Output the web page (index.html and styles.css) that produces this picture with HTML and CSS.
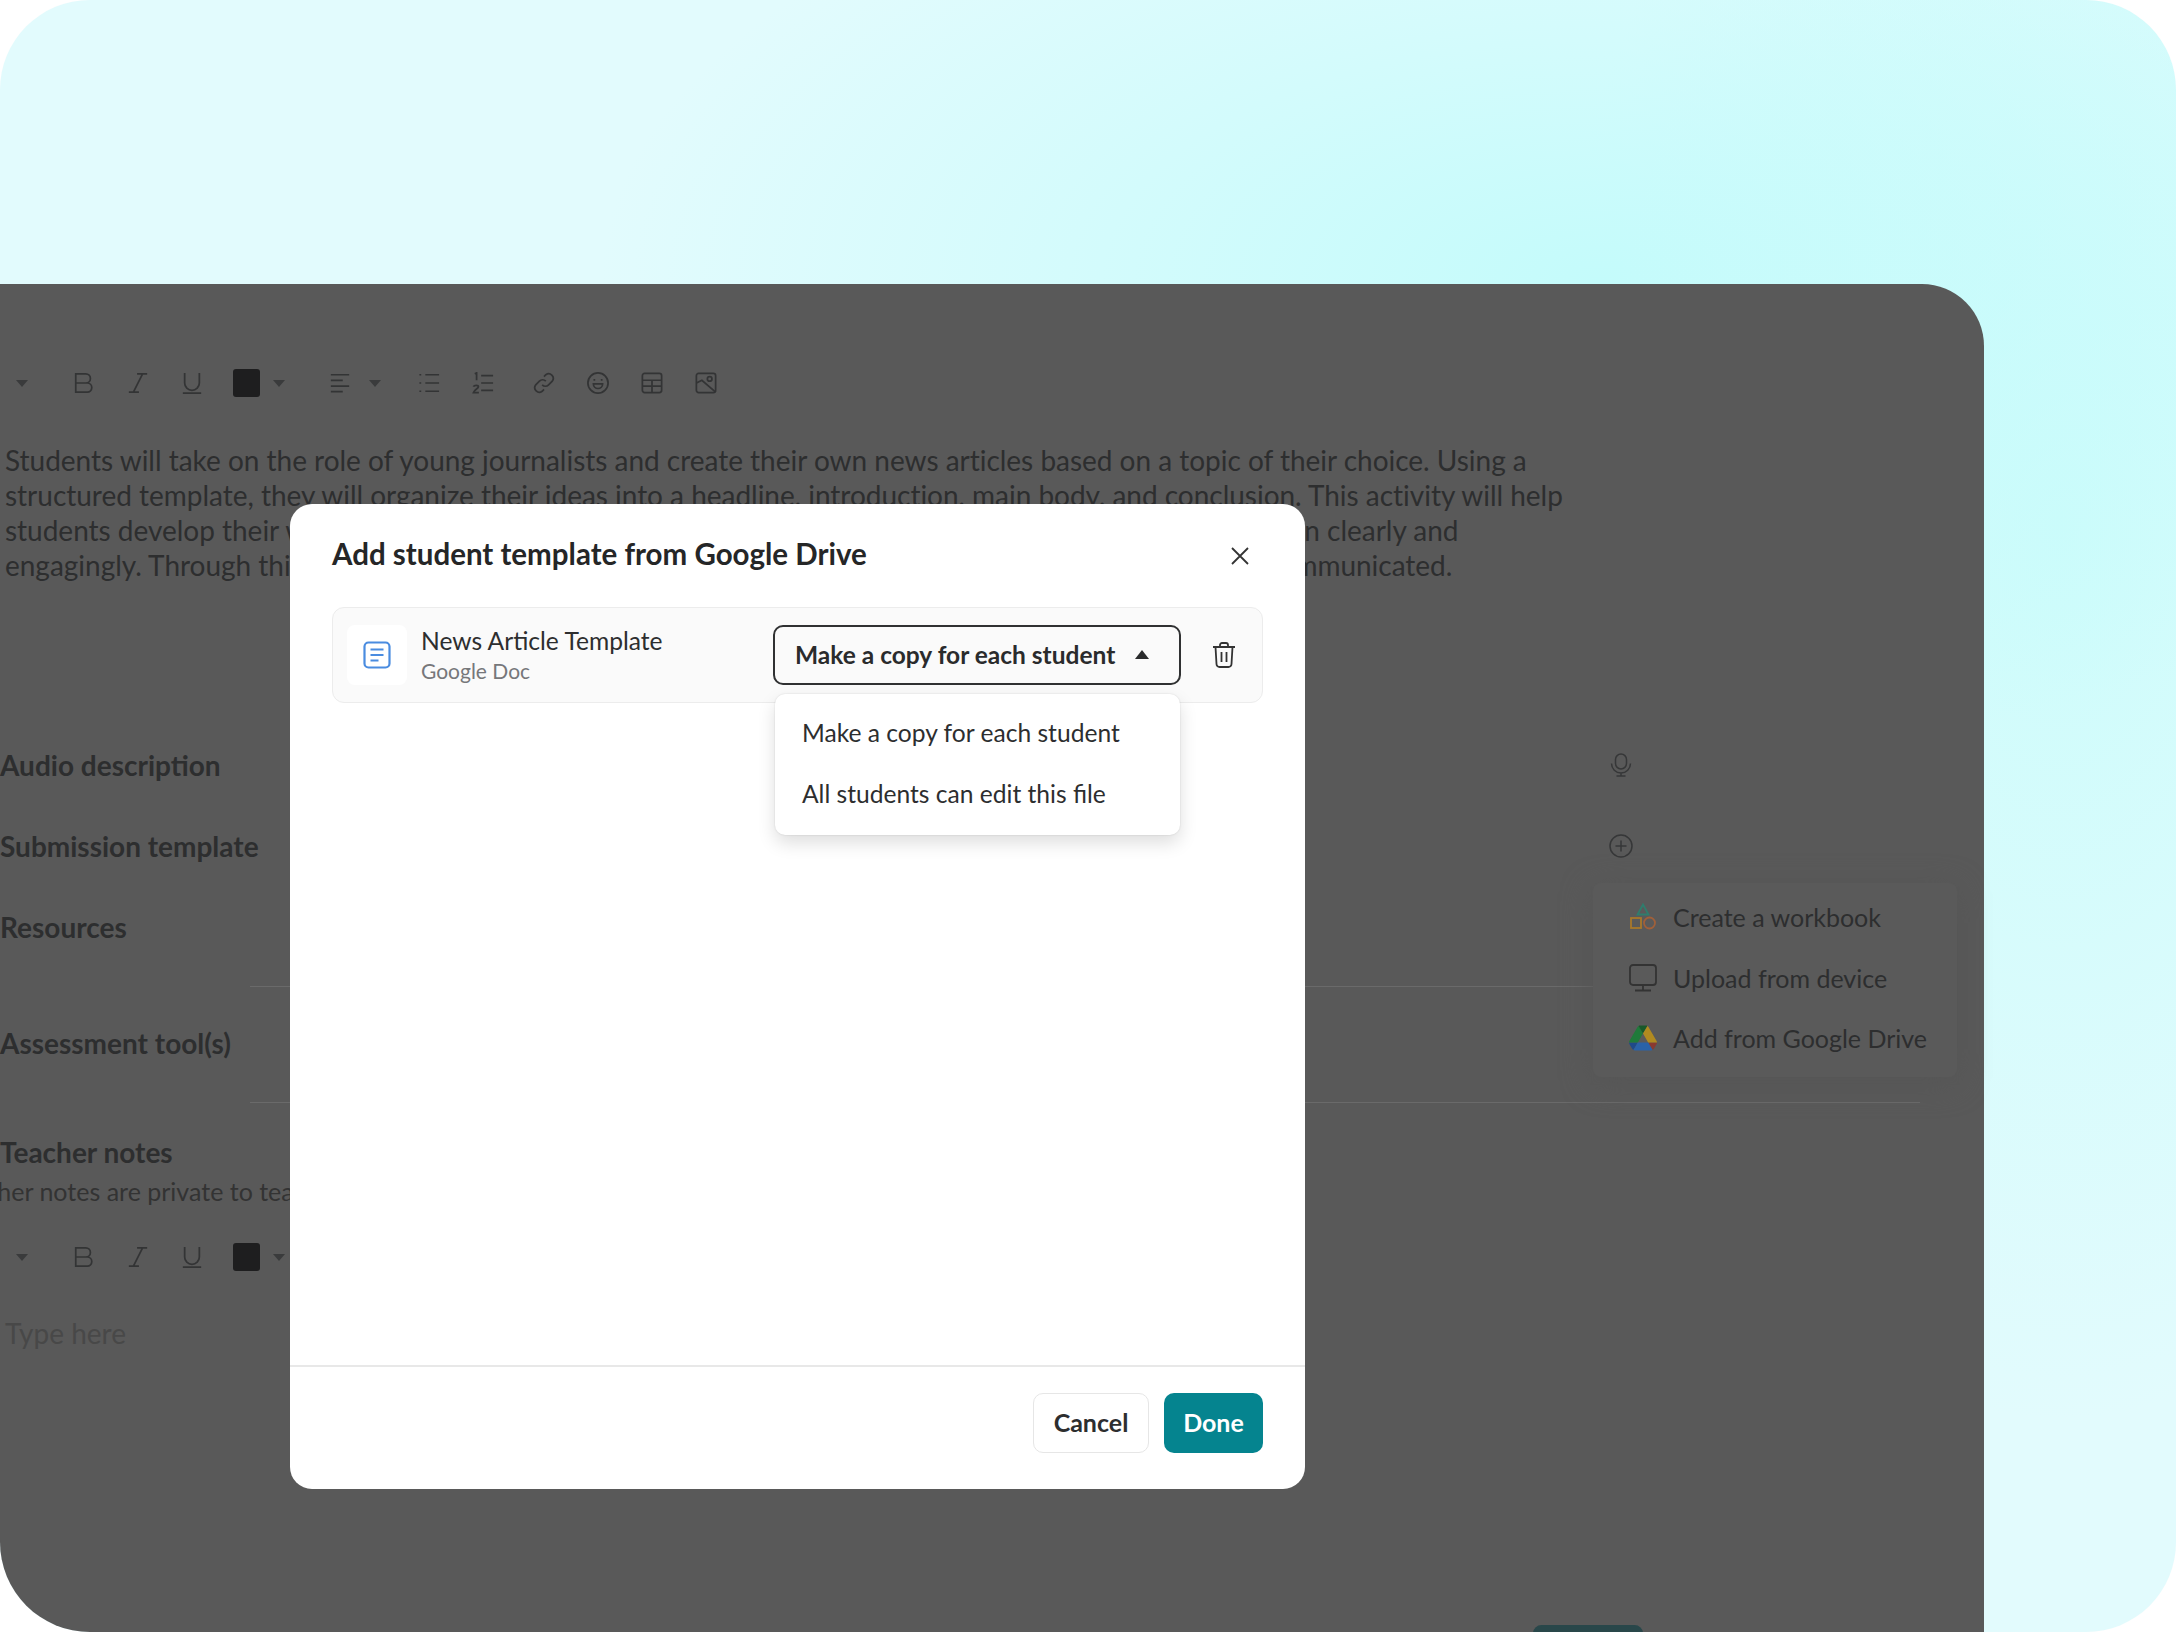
FILE: index.html
```html
<!DOCTYPE html>
<html lang="en">
<head>
  <meta charset="UTF-8">
  <title>Add student template</title>
  <link rel="stylesheet" href="styles.css">
</head>
<body>
  <div class="stage">
    <main class="panel">
      <div class="toolbar">
        <svg class="caret caret-first" viewBox="0 0 12 7"><path d="M0 0h12L6 7z"/></svg>
        <span class="tool"><svg viewBox="0 0 24 24"><path d="M3 2h11a5 5 0 0 1 0 10H3zM3 12h12.500a5 5 0 0 1 0 10H3z"/></svg></span>
        <span class="tool"><svg viewBox="0 0 24 24"><path d="M11 2h11M2 22h11M17 2L7 22"/></svg></span>
        <span class="tool"><svg viewBox="0 0 24 24"><path d="M4 1v11a8 8 0 0 0 16 0V1M2 23h20"/></svg></span>
        <span class="tool"><span class="swatch"></span></span>
        <svg class="caret" viewBox="0 0 12 7"><path d="M0 0h12L6 7z"/></svg>
        <span class="tool tool-align"><svg viewBox="0 0 24 24"><path d="M2 3h20M2 9.200h13M2 15.400h20M2 21.500h13"/></svg></span>
        <svg class="caret caret-align" viewBox="0 0 12 7"><path d="M0 0h12L6 7z"/></svg>
        <span class="tool tool-list"><svg viewBox="0 0 24 24"><path d="M8 3h15M8 12h15M8 21h15M1.500 3h2M1.500 12h2M1.500 21h2"/></svg></span>
        <span class="tool"><svg viewBox="0 0 24 24"><path d="M10 4h13M10 12h13M10 20h13M3 2l2-1v8M1.500 16c1-2 5.500-2 5.500 0 0 2-4.500 3-5.500 6.500H7.500"/></svg></span>
        <span class="tool tool-link"><svg viewBox="0 0 24 24"><path d="M10 14a5 5 0 0 0 7 0l4-4a5 5 0 0 0-7-7l-2 2M14 10a5 5 0 0 0-7 0l-4 4a5 5 0 0 0 7 7l2-2"/></svg></span>
        <span class="tool"><svg viewBox="0 0 24 24"><circle cx="12" cy="12" r="11"/><path d="M7 13h10a5 5 0 0 1-10 0zM8 7.500v2M16 7.500v2"/></svg></span>
        <span class="tool"><svg viewBox="0 0 24 24"><rect x="1.500" y="1.500" width="21" height="21" rx="2.500"/><path d="M1.500 9h21M1.500 15.500h21M12 9v13.500"/></svg></span>
        <span class="tool"><svg viewBox="0 0 24 24"><rect x="1.500" y="1.500" width="21" height="21" rx="2.500"/><circle cx="16" cy="7.500" r="2.500"/><path d="M1.500 12l6-3 15 13"/></svg></span>
      </div>

      <p class="summary">Students will take on the role of young journalists and create their own news articles based on a topic of their choice. Using a<br>
      structured template, they will organize their ideas into a headline, introduction, main body, and conclusion. This activity will help<br>
      students develop their writing skills, learn how to research facts, and practice presenting factual information clearly and<br>
      engagingly. Through this project, they will learn how news stories are researched, planned, written, and communicated.</p>

      <div class="row row-audio">
        <span class="label">Audio description</span>
        <svg class="row-icon" viewBox="0 0 24 24"><rect x="6.500" y="1" width="11" height="15" rx="5.500"/><path d="M2.500 10.500a9.500 9.500 0 0 0 19 0M12 20v3M7.500 23h9"/></svg>
      </div>
      <div class="row row-next">
        <span class="label">Submission template</span>
        <svg class="row-icon" viewBox="0 0 24 24"><circle cx="12" cy="12" r="11"/><path d="M12 6.500v11M6.500 12h11"/></svg>
      </div>
      <div class="row row-next"><span class="label">Resources</span></div>
      <hr class="rule">
      <div class="row row-assess"><span class="label">Assessment tool(s)</span></div>
      <hr class="rule">
      <div class="row row-notes"><span class="label">Teacher notes</span></div>
      <div class="hint">Teacher notes are private to teachers</div>

      <div class="toolbar toolbar-notes">
        <svg class="caret caret-first" viewBox="0 0 12 7"><path d="M0 0h12L6 7z"/></svg>
        <span class="tool"><svg viewBox="0 0 24 24"><path d="M3 2h11a5 5 0 0 1 0 10H3zM3 12h12.500a5 5 0 0 1 0 10H3z"/></svg></span>
        <span class="tool"><svg viewBox="0 0 24 24"><path d="M11 2h11M2 22h11M17 2L7 22"/></svg></span>
        <span class="tool"><svg viewBox="0 0 24 24"><path d="M4 1v11a8 8 0 0 0 16 0V1M2 23h20"/></svg></span>
        <span class="tool"><span class="swatch"></span></span>
        <svg class="caret" viewBox="0 0 12 7"><path d="M0 0h12L6 7z"/></svg>
      </div>
      <div class="placeholder">Type here</div>

      <!-- popup left open behind the dialog -->
      <ul class="add-menu">
        <li>
          <svg viewBox="0 0 28 28"><path class="wb-tri" d="M14 1.500l5.500 10h-11z"/><rect class="wb-box" x="2" y="15" width="10" height="10"/><circle class="wb-dot" cx="20.500" cy="20" r="5.500"/></svg>
          Create a workbook
        </li>
        <li>
          <svg viewBox="0 0 28 28"><rect x="1" y="1" width="26" height="20" rx="3"/><path d="M14 21v5M6 26.500h16"/></svg>
          Upload from device
        </li>
        <li>
          <svg class="drive" viewBox="0 0 87.300 78">
            <path fill="#1f4a8a" d="m6.600 66.850 3.850 6.650c.8 1.400 1.950 2.500 3.300 3.300l13.750-23.800h-27.500c0 1.550.4 3.100 1.200 4.500z"/>
            <path fill="#1f7a3a" d="m43.650 25-13.750-23.800c-1.350.8-2.500 1.900-3.300 3.300l-25.400 44a9.060 9.060 0 0 0-1.200 4.500h27.500z"/>
            <path fill="#8a3a30" d="m73.550 76.800c1.350-.8 2.500-1.900 3.300-3.300l1.600-2.750 7.650-13.250c.8-1.400 1.200-2.950 1.200-4.500h-27.502l5.852 11.500z"/>
            <path fill="#18592a" d="m43.650 25 13.750-23.800c-1.350-.8-2.900-1.200-4.500-1.200h-18.500c-1.600 0-3.150.45-4.500 1.200z"/>
            <path fill="#2a62a8" d="m59.800 53h-32.300l-13.750 23.800c1.350.8 2.900 1.200 4.500 1.200h50.800c1.600 0 3.150-.45 4.500-1.200z"/>
            <path fill="#b08a20" d="m73.400 26.500-12.700-22c-.8-1.400-1.950-2.500-3.300-3.300l-13.750 23.800 16.150 28h27.450c0-1.550-.4-3.100-1.200-4.500z"/>
          </svg>
          Add from Google Drive
        </li>
      </ul>
      <span class="peek-button"></span>
    </main>

    <section class="dialog">
      <header class="dialog-head">
        <h2>Add student template from Google Drive</h2>
        <svg class="close" viewBox="0 0 18 18"><path d="M1 1l16 16M17 1L1 17"/></svg>
      </header>
      <div class="dialog-body">
        <div class="file-card">
          <span class="file-tile">
            <svg viewBox="0 0 28 28"><rect x="1.500" y="1.500" width="25" height="25" rx="4"/><path d="M7.500 8.500h13M7.500 14h13M7.500 19.500h8"/></svg>
          </span>
          <div class="file-text">
            <div class="file-name">News Article Template</div>
            <div class="file-type">Google Doc</div>
          </div>
          <div class="select">
            Make a copy for each student
            <svg viewBox="0 0 14 9"><path d="M7 0l7 9H0z"/></svg>
          </div>
          <svg class="trash" viewBox="0 0 24 26"><path d="M1 5h22M8 5V3a2 2 0 0 1 2-2h4a2 2 0 0 1 2 2v2M3.500 5l1 17a3 3 0 0 0 3 3h9a3 3 0 0 0 3-3l1-17M9.500 10v10M14.500 10v10"/></svg>
        </div>
        <ul class="select-menu">
          <li>Make a copy for each student</li>
          <li>All students can edit this file</li>
        </ul>
      </div>
      <footer class="dialog-foot">
        <button class="btn btn-cancel">Cancel</button>
        <button class="btn btn-done">Done</button>
      </footer>
    </section>
  </div>
</body>
</html>
```

FILE: styles.css
```css
:root {
  --ink: #2c2d2e;
  --dim-ink: #2d2e2f;
  --panel: #595959;
  --teal: #05848f;
  --font-sans: "Lato", "Open Sans", sans-serif;
}
body {
  margin: 0;
  background: #fff;
  font-family: var(--font-sans);
  color: var(--ink);
}
.stage {
  position: relative;
  width: 2176px;
  height: 1632px;
  padding-top: 284px;
  box-sizing: border-box;
  overflow: hidden;
  border-radius: 90px;
  background:
    radial-gradient(ellipse 1000px 480px at 1600px 280px, #c4fbfb, #c4fbfb00),
    radial-gradient(ellipse 520px 900px at 2060px 520px, #cdfcfb, #cdfcfb00),
    #e2fbfd;
}

/* the dimmed page behind the dialog */
.panel {
  position: relative;
  width: 1984px;
  height: 1348px;
  padding-top: 77px;
  box-sizing: border-box;
  background: var(--panel);
  border-top-right-radius: 62px;
  color: var(--dim-ink);
}
.toolbar {
  display: flex;
  align-items: center;
  height: 44px;
}
.tool {
  display: flex;
  align-items: center;
  justify-content: center;
  width: 54px;
  height: 44px;
  flex: none;
}
.tool svg {
  width: 22px;
  height: 22px;
  fill: none;
  stroke: #333435;
  stroke-width: 1.9;
}
.swatch {
  width: 27px;
  height: 28px;
  border-radius: 3px;
  background: #1e1e1f;
}
.caret {
  width: 12px;
  height: 7px;
  flex: none;
  fill: #3a3b3c;
}
.caret-first { margin: 0 29px 0 16px; }
.tool-align { margin-left: 28px; }
.caret-align { margin-left: 2px; }
.tool-list { margin-left: 21px; }
.tool-link { margin-left: 7px; }

.summary {
  margin: 38px 0 0 5px;
  font-size: 28px;
  line-height: 35px;
  letter-spacing: -0.02px;
  white-space: nowrap;
}
.row {
  display: flex;
  align-items: center;
  justify-content: space-between;
  width: 1637px;
  height: 40px;
}
.row-audio { margin-top: 162px; }
.row-next { margin-top: 41px; }
.row-assess { margin-top: 36px; }
.row-notes { margin-top: 29px; }
.label {
  font-size: 28px;
  font-weight: 700;
}
.row-icon {
  width: 24px;
  height: 24px;
  margin-right: 4px;
  fill: none;
  stroke: #363738;
  stroke-width: 1.5;
}
.rule {
  height: 1px;
  margin: 39px 64px 0 250px;
  border: 0;
  background: #6a6a6a;
}
.rule + .row-notes { margin-top: 29px; }
.hint {
  margin: 2px 0 0 -52px;
  font-size: 25px;
  line-height: 34px;
  color: #333;
  white-space: nowrap;
}
.toolbar-notes { margin-top: 27px; }
.placeholder {
  margin: 37px 0 0 5px;
  font-size: 28px;
  line-height: 35px;
  color: #484848;
}

.add-menu {
  position: absolute;
  left: 1593px;
  top: 599px;
  width: 364px;
  height: 194px;
  margin: 0;
  padding: 4px 0 0;
  box-sizing: border-box;
  list-style: none;
  background: #5a5a5a;
  border-radius: 8px;
  box-shadow: 0 6px 30px #565656;
}
.add-menu li {
  display: flex;
  align-items: center;
  gap: 16px;
  height: 60.500px;
  padding-left: 36px;
  font-size: 25px;
}
.add-menu svg {
  width: 28px;
  height: 28px;
  flex: none;
  fill: none;
  stroke: #333;
  stroke-width: 1.8;
}
.add-menu svg.drive { stroke: none; }
.add-menu .wb-tri { stroke: #2f7d6d; }
.add-menu .wb-box { stroke: #a8782a; }
.add-menu .wb-dot { stroke: #a0603a; }
.peek-button {
  position: absolute;
  left: 1533px;
  bottom: -10px;
  width: 110px;
  height: 17px;
  border-radius: 10px;
  background: #29474a;
}

/* dialog */
.dialog {
  position: absolute;
  left: 290px;
  top: 504px;
  display: flex;
  flex-direction: column;
  width: 1015px;
  height: 985px;
  background: #fff;
  border-radius: 22px;
}
.dialog-head {
  display: flex;
  align-items: center;
  justify-content: space-between;
  height: 103px;
  padding: 0 56px 0 42px;
}
.dialog-head h2 {
  margin: 0 0 4px;
  font-size: 29.500px;
  font-weight: 700;
  color: #252627;
}
.close {
  width: 18px;
  height: 18px;
  fill: none;
  stroke: #333;
  stroke-width: 1.8;
}
.dialog-body {
  position: relative;
  flex: 1;
  padding: 0 42px;
}
.file-card {
  display: flex;
  align-items: center;
  height: 96px;
  padding: 0 26px 0 14px;
  box-sizing: border-box;
  background: #fafafa;
  border: 1px solid #ececec;
  border-radius: 12px;
}
.file-tile {
  display: flex;
  align-items: center;
  justify-content: center;
  width: 60px;
  height: 60px;
  flex: none;
  background: #fff;
  border-radius: 8px;
}
.file-tile svg {
  width: 28px;
  height: 28px;
  fill: none;
  stroke: #4a8ce0;
  stroke-width: 2.2;
}
.file-text {
  flex: 1;
  margin: -2px 0 0 14px;
}
.file-name {
  font-size: 24.600px;
  line-height: 32px;
  color: #2d2e2f;
}
.file-type {
  margin-top: 1px;
  font-size: 21px;
  line-height: 26px;
  color: #76777a;
}
.select {
  display: flex;
  align-items: center;
  gap: 20px;
  width: 408px;
  height: 60px;
  padding: 0 20px 2px;
  box-sizing: border-box;
  background: #fafafa;
  border: 2px solid #303132;
  border-radius: 10px;
  font-size: 24.500px;
  font-weight: 700;
  color: #2a2b2c;
  white-space: nowrap;
}
.select svg {
  width: 14px;
  height: 9px;
  fill: #2a2b2c;
}
.trash {
  width: 24px;
  height: 26px;
  margin-left: 31px;
  flex: none;
  fill: none;
  stroke: #333;
  stroke-width: 1.8;
}
.select-menu {
  position: absolute;
  left: 485px;
  top: 87px;
  width: 405px;
  height: 141px;
  margin: 0;
  padding: 8px 0 0 27px;
  box-sizing: border-box;
  list-style: none;
  background: #fff;
  border-radius: 10px;
  box-shadow: 0 0 2px #0002, 0 8px 18px #0002;
  font-size: 24.600px;
  color: #2d2e2f;
}
.select-menu li {
  height: 61px;
  line-height: 61px;
  white-space: nowrap;
}
.dialog-foot {
  display: flex;
  justify-content: flex-end;
  gap: 15px;
  height: 124px;
  padding: 26px 42px 0;
  box-sizing: border-box;
  border-top: 2px solid #e8e8e8;
}
.btn {
  height: 60px;
  padding: 0 0 3px;
  border-radius: 10px;
  font-family: inherit;
  font-size: 25px;
  font-weight: 700;
}
.btn-cancel {
  width: 116px;
  background: #fff;
  border: 1px solid #e6e6e6;
  color: #2d2e2f;
}
.btn-done {
  width: 99px;
  background: var(--teal);
  border: 0;
  color: #fff;
}
```
